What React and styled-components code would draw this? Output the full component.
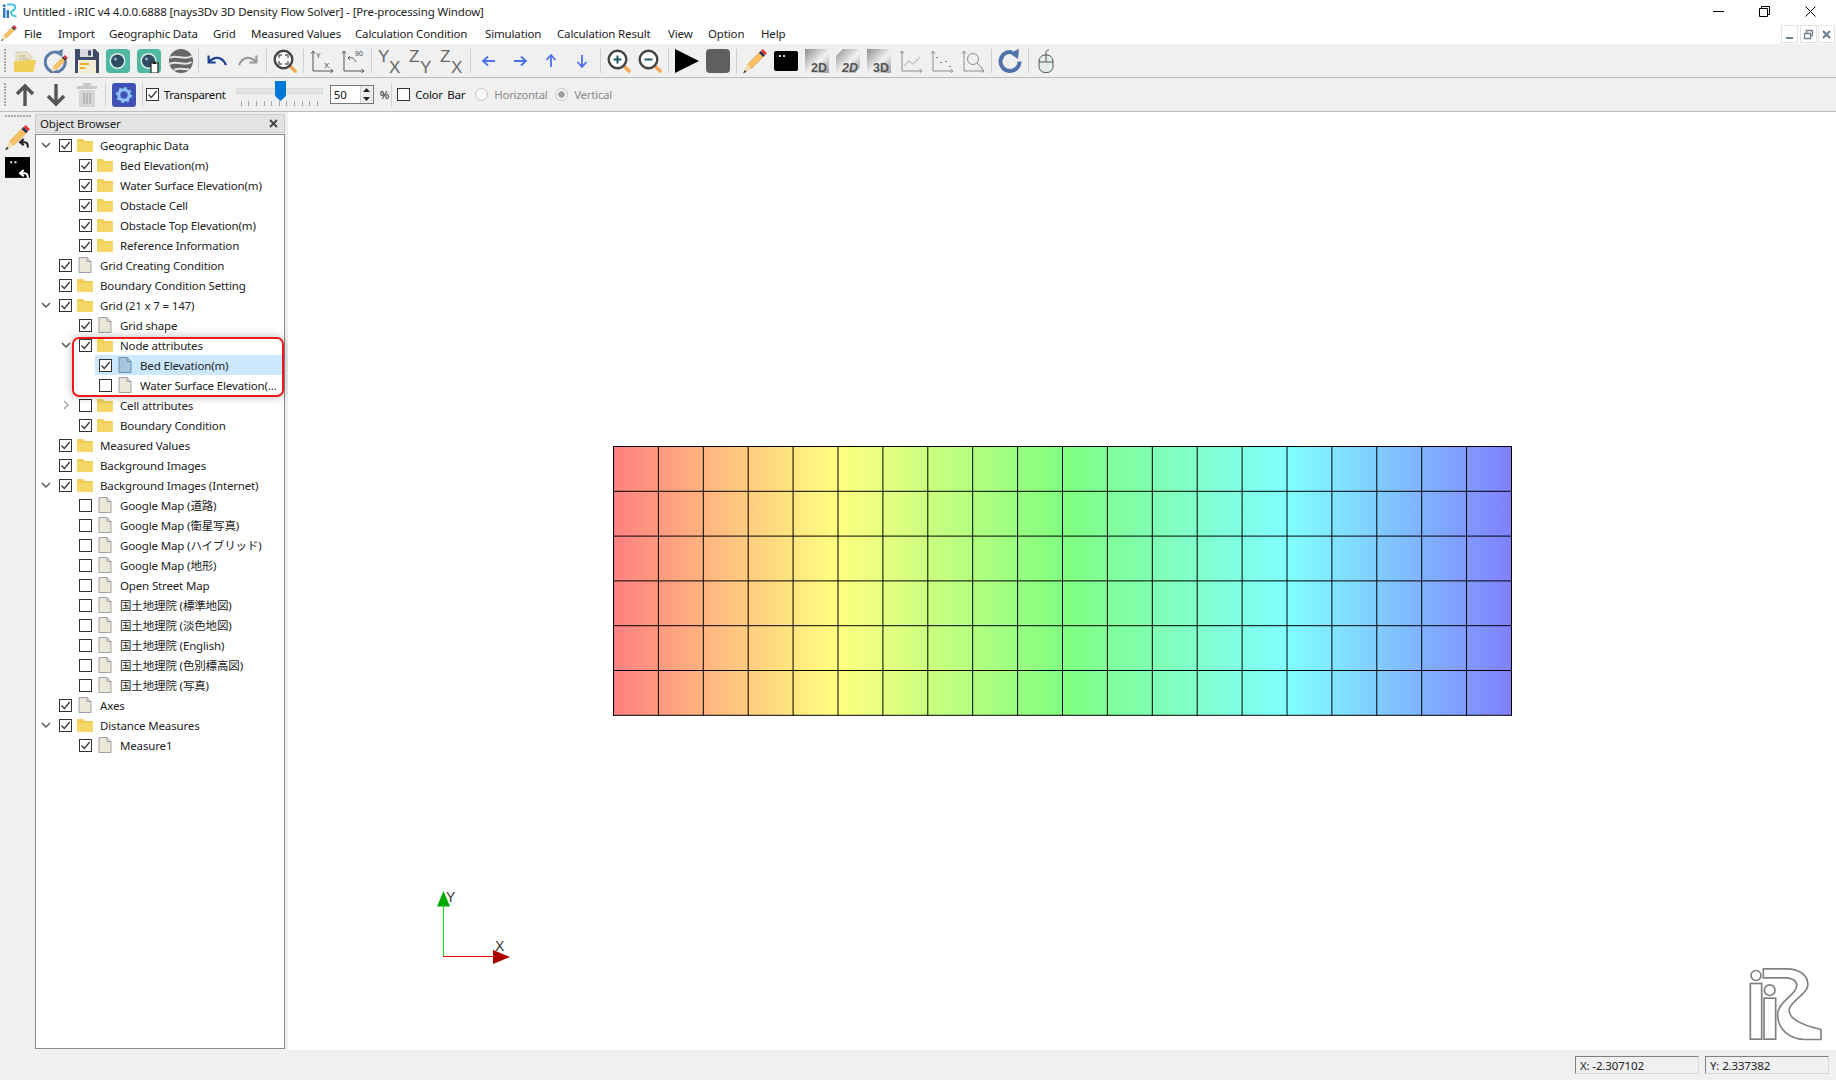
import React from 'react'
import styled, { createGlobalStyle } from 'styled-components'

const GlobalStyle = createGlobalStyle`
  html, body { margin: 0; padding: 0; background: #fff; }
  body {
    font-family: "Noto Sans", "Noto Sans CJK JP", sans-serif;
    font-size: 11.5px;
    letter-spacing: -0.15px;
    color: #111;
    overflow: hidden;
  }
`

const MENUS = [
  ['File', 17], ['Import', 34], ['Geographic Data', 87], ['Grid', 21], ['Measured Values', 87],
  ['Calculation Condition', 113], ['Simulation', 55], ['Calculation Result', 94], ['View', 23], ['Option', 36], ['Help', 26],
]

// level, arrow, checked, icon, label
const TREE = [
  [0, 'open', 1, 'folder', 'Geographic Data'],
  [1, '', 1, 'folder', 'Bed Elevation(m)'],
  [1, '', 1, 'folder', 'Water Surface Elevation(m)'],
  [1, '', 1, 'folder', 'Obstacle Cell'],
  [1, '', 1, 'folder', 'Obstacle Top Elevation(m)'],
  [1, '', 1, 'folder', 'Reference Information'],
  [0, '', 1, 'file', 'Grid Creating Condition'],
  [0, '', 1, 'folder', 'Boundary Condition Setting'],
  [0, 'open', 1, 'folder', 'Grid (21 x 7 = 147)'],
  [1, '', 1, 'file', 'Grid shape'],
  [1, 'open', 1, 'folder', 'Node attributes'],
  [2, '', 1, 'selected', 'Bed Elevation(m)'],
  [2, '', 0, 'file', 'Water Surface Elevation(...'],
  [1, 'closed', 0, 'folder', 'Cell attributes'],
  [1, '', 1, 'folder', 'Boundary Condition'],
  [0, '', 1, 'folder', 'Measured Values'],
  [0, '', 1, 'folder', 'Background Images'],
  [0, 'open', 1, 'folder', 'Background Images (Internet)'],
  [1, '', 0, 'file', 'Google Map (道路)'],
  [1, '', 0, 'file', 'Google Map (衛星写真)'],
  [1, '', 0, 'file', 'Google Map (ハイブリッド)'],
  [1, '', 0, 'file', 'Google Map (地形)'],
  [1, '', 0, 'file', 'Open Street Map'],
  [1, '', 0, 'file', '国土地理院 (標準地図)'],
  [1, '', 0, 'file', '国土地理院 (淡色地図)'],
  [1, '', 0, 'file', '国土地理院 (English)'],
  [1, '', 0, 'file', '国土地理院 (色別標高図)'],
  [1, '', 0, 'file', '国土地理院 (写真)'],
  [0, '', 1, 'file', 'Axes'],
  [0, 'open', 1, 'folder', 'Distance Measures'],
  [1, '', 1, 'file', 'Measure1'],
]

const Svg = ({ size = 24, children }) => (
  <svg width={size} height={size} viewBox="0 0 24 24">{children}</svg>
)

const PencilShape = () => (
  <g transform="translate(-2.9 -2.7) scale(1.18)">
    <polygon points="6,15.5 17,4.5 20.5,8 9.5,19" fill="#f7c063" stroke="#e09a3c" strokeWidth="0.5" />
    <polygon points="6,15.5 9.5,19 2.5,23" fill="#f4dcae" />
    <polygon points="4,20 5.5,21.5 2.5,23" fill="#333" />
    <polygon points="16,5.5 17.6,3.9 21.1,7.4 19.5,9" fill="#26365c" />
    <polygon points="17.6,3.9 19.2,2.3 22.7,5.8 21.1,7.4" fill="#e5303c" />
  </g>
)
const Pencil = ({ size }) => <Svg size={size}><PencilShape /></Svg>

const OpenFolder = () => (
  <Svg>
    <path d="M3 3h11l5 5v6H3z" fill="#e9e2c8" stroke="#c9c2a6" strokeWidth="0.6" />
    <path d="M6 7h7M6 10h10" stroke="#b9b39a" strokeWidth="1" />
    <path d="M1 12h8l2-1h12l-2.5 12H1z" fill="#f1cf58" />
  </Svg>
)
const RefreshEdit = () => (
  <Svg>
    <path d="M14 3.5A10 10 0 1 0 21 11" fill="none" stroke="#5b7cab" strokeWidth="3" />
    <polygon points="11,3.5 19,0 18,8" fill="#5b7cab" />
    <g transform="translate(6 6) scale(0.75)"><PencilShape /></g>
  </Svg>
)
const Floppy = () => (
  <Svg>
    <path d="M0 0h20l4 4v20H0z" fill="#3f4b69" />
    <rect x="5" y="0" width="13" height="8" fill="#d8dade" />
    <rect x="13" y="1.5" width="3" height="5" fill="#3f4b69" />
    <rect x="3" y="11" width="18" height="13" fill="#f4ecd6" />
    <rect x="5" y="14" width="9" height="2" fill="#e8b32a" />
    <rect x="5" y="18" width="5" height="2" fill="#e8b32a" />
  </Svg>
)
const Lens = ({ paper }) => (
  <Svg>
    <rect width="24" height="24" rx="4" fill="#4fb8a3" />
    <circle cx="11.5" cy="12" r="8" fill="#dcefea" />
    <circle cx="11.5" cy="12" r="6.5" fill="#2f4d62" />
    <circle cx="9.5" cy="10" r="1.6" fill="#8fb0c4" />
    {paper && <path d="M14 14h7v10H14z" fill="#fff" stroke="#222" strokeWidth="1.2" />}
    {paper && <rect x="16" y="12.5" width="3" height="2.5" fill="#222" />}
  </Svg>
)
const Globe = () => (
  <Svg>
    <circle cx="12" cy="12" r="12" fill="#666" />
    <path d="M1 9c6-4 14 3 22-2M0.5 15c8-4 15 3 22-2M5 21c6-3 10 0 15-1" fill="none" stroke="#e4e4e4" strokeWidth="2" />
  </Svg>
)
const Undo = ({ color, flip }) => (
  <Svg>
    <g transform={flip ? 'translate(24 0) scale(-1 1)' : undefined} fill="none" stroke={color} strokeWidth="2.2">
      <path d="M4 13c5-6 13-6 17 3" />
      <path d="M3.6 6.5v7h7" />
    </g>
  </Svg>
)
const Magnifier = ({ children, size = 24 }) => (
  <Svg size={size}>
    <line x1="15.5" y1="15.5" x2="22" y2="22" stroke="#f2a956" strokeWidth="3.6" strokeLinecap="round" />
    <circle cx="10.5" cy="10.5" r="8.8" fill="#fff" stroke="#444" strokeWidth="2.4" />
    {children}
  </Svg>
)
const AxisLines = () => (
  <g fill="none" stroke="#555" strokeWidth="1">
    <path d="M3 22V2M1 4.5 3 2l2 2.5M3 22h20M20.5 20l2.5 2-2.5 2" />
  </g>
)
const AxisText = styled.text`
  font-family: "Liberation Sans", sans-serif;
  letter-spacing: 0;
  fill: ${p => p.$fill || '#444'};
  font-weight: ${p => p.$bold ? 700 : 400};
  font-style: ${p => p.$italic ? 'italic' : 'normal'};
`
const AxisXY = () => (
  <Svg><AxisLines /><AxisText x="6" y="9" fontSize="7">Y</AxisText><AxisText x="14" y="19" fontSize="8">X</AxisText></Svg>
)
const AxisRot = () => (
  <Svg>
    <AxisLines />
    <path d="M15 13C13 9 11 8 7 9M7 9l2-2M7 9l2 2" fill="none" stroke="#555" />
    <AxisText x="14" y="7" fontSize="7">90</AxisText>
  </Svg>
)
const Letters = ({ a, b }) => (
  <svg width="30" height="30" viewBox="-3 -3 30 30">
    <AxisText x="0" y="13" fontSize="17" $fill="#666">{a}</AxisText>
    <AxisText x="11" y="24" fontSize="17" $fill="#666">{b}</AxisText>
  </svg>
)
const Arrow = ({ dir, color = '#4c6ff0', stroke = 1.8 }) => {
  const rot = { left: 180, right: 0, up: -90, down: 90 }[dir]
  return (
    <Svg>
      <g transform={`rotate(${rot} 12 12)`} fill="none" stroke={color} strokeWidth={stroke}>
        <path d="M6 12h12M13 7.5l5 4.5-5 4.5" />
      </g>
    </Svg>
  )
}
const Play = () => <Svg><polygon points="0,0 24,12 0,24" fill="#000" /></Svg>
const Stop = () => <Svg><rect width="24" height="24" rx="4" fill="#5f5f5f" /></Svg>
const Terminal = ({ size }) => (
  <Svg size={size}>
    <rect x="0" y="2" width="24" height="20" rx="2" fill="#000" />
    <rect x="5" y="6" width="2" height="2" fill="#ddd" />
    <rect x="9" y="6" width="2" height="2" fill="#ddd" />
  </Svg>
)
const View2D = ({ id, label, fold, italic }) => (
  <svg width="28" height="28" viewBox="-2 -2 28 28">
    <defs>
      <linearGradient id={id} x1="0" y1="0" x2="1" y2="1">
        <stop offset="0" stopColor="#8d8d8d" />
        <stop offset="0.55" stopColor="#f2f2f2" />
        <stop offset="1" stopColor="#9a9a9a" />
      </linearGradient>
    </defs>
    {fold
      ? <path d="M7 0H24V18L19 24H0V7z" fill={`url(#${id})`} />
      : <rect width="24" height="24" fill={`url(#${id})`} />}
    <AxisText x="6" y="23" fontSize="12.5" $bold $italic={italic} $fill="#555">{label}</AxisText>
  </svg>
)
const ChartAxes = ({ children }) => (
  <Svg>
    <g fill="none" stroke="#8f8f8f" strokeWidth="1">
      <path d="M3 22V2M1 4.5 3 2l2 2.5M3 22h20M20.5 20l2.5 2-2.5 2" />
      {children}
    </g>
  </Svg>
)
const Reload = () => (
  <Svg>
    <path d="M14 3.2A9.5 9.5 0 1 0 21.5 12.5" fill="none" stroke="#4f73a8" strokeWidth="4" />
    <polygon points="11,4 21,0 20,10" fill="#4f73a8" />
  </Svg>
)
const Mouse = () => (
  <Svg>
    <rect x="5" y="6" width="14" height="17.5" rx="6" fill="#e5ecec" stroke="#555" />
    <path d="M5 13h14M12 6v7" stroke="#555" fill="none" />
    <path d="M12 6V3c0-1.5 2-2 3-2" stroke="#555" fill="none" />
  </Svg>
)
const Trash = () => (
  <Svg>
    <rect x="8" y="0" width="8" height="3" fill="#c9c9c9" />
    <rect x="2" y="3" width="20" height="3" fill="#c9c9c9" />
    <path d="M4 7h16v17H4z" fill="#d6d6d6" />
    <path d="M9 10v11M12 10v11M15 10v11" stroke="#b0b0b0" strokeWidth="1.6" />
  </Svg>
)
const Gear = () => (
  <Svg>
    <rect width="24" height="24" rx="3" fill="#4052b5" />
    <circle cx="12" cy="12" r="5.2" fill="none" stroke="#8ec4f8" strokeWidth="3" />
    <circle cx="12" cy="12" r="7" fill="none" stroke="#8ec4f8" strokeWidth="2" strokeDasharray="2.5 3" />
  </Svg>
)
const BigArrow = ({ up }) => (
  <Svg>
    <g transform={up ? undefined : 'rotate(180 12 12)'} fill="none" stroke="#555" strokeWidth="3.4">
      <path d="M12 23V3M4 11l8-8 8 8" />
    </g>
  </Svg>
)
const BackArrow = ({ color }) => (
  <g fill="none" stroke={color} strokeWidth="2">
    <path d="M15 16.5h4c2 0 3 2 3 5M18 13.5l-3.5 3 3.5 3" />
  </g>
)

const Window = styled.div`
  position: relative;
  width: 100vw;
  height: 100vh;
  display: flex;
  flex-direction: column;
  overflow: hidden;
`
const TitleBar = styled.div`
  height: 22px;
  display: flex;
  align-items: center;
  padding-left: 2px;
  background: #fff;
  color: #222;
`
const TitleText = styled.span`
  margin-left: 6px;
  white-space: nowrap;
`
const WinButtons = styled.div`
  margin-left: auto;
  display: flex;
  align-items: center;
  gap: 35px;
  padding-right: 20px;
`
const MenuBar = styled.div`
  height: 22px;
  display: flex;
  align-items: center;
  background: #fff;
  padding-left: 1px;
  border-bottom: 1px solid #f0f0f0;
`
const MenuItem = styled.span`
  width: ${p => p.$w}px;
  margin-right: 17px;
  white-space: nowrap;
  color: #222;
`
const MenuSlot = styled.span`
  width: 23px;
  display: flex;
`
const MdiButtons = styled.div`
  margin-left: auto;
  margin-top: 2px;
  display: flex;
  gap: 1.5px;
  padding-right: 1px;
`
const MdiButton = styled.span`
  width: 17px;
  height: 18px;
  box-sizing: border-box;
  border: 1px solid #e2e2e2;
  display: flex;
  align-items: center;
  justify-content: center;
`
const Toolbar = styled.div`
  height: ${p => p.$h}px;
  flex: none;
  box-sizing: border-box;
  display: flex;
  align-items: center;
  background: #f0f0f0;
  border-bottom: 1px solid #bdbdbd;
`
const Handle = styled.span`
  width: 9px;
  height: 24px;
  flex: none;
  background: radial-gradient(circle at 5px 1px, #aaa 1px, transparent 1.2px) 0 0 / 9px 3px repeat-y;
`
const ToolButton = styled.span`
  width: 31.2px;
  flex: none;
  display: flex;
  justify-content: center;
`
const Separator = styled.span`
  width: 5.5px;
  height: 24px;
  flex: none;
  display: flex;
  justify-content: center;
  &::before { content: ''; width: 1px; background: #cfcfcf; }
`
const Label = styled.span`
  flex: none;
  width: ${p => p.$w}px;
  margin-left: ${p => p.$ml || 0}px;
  white-space: nowrap;
  letter-spacing: -0.3px;
  word-spacing: ${p => p.$wide ? 2 : 0}px;
  color: ${p => p.$off ? '#8a8a8a' : '#111'};
`
const CheckBox = styled.span`
  width: 13px;
  height: 13px;
  flex: none;
  box-sizing: border-box;
  border: 1px solid #333;
  background: #fff;
  display: flex;
  align-items: center;
  justify-content: center;
  margin-left: ${p => p.$ml || 0}px;
`
const Check = ({ on, ml }) => (
  <CheckBox $ml={ml}>
    {on ? (
      <svg width="11" height="11" viewBox="0 0 11 11">
        <path d="M1.5 5.5 4.3 8.5 9.7 2" fill="none" stroke="#333" strokeWidth="1.2" />
      </svg>
    ) : null}
  </CheckBox>
)
const Slider = styled.div`
  position: relative;
  width: 87px;
  height: 26px;
  flex: none;
  margin-left: 11px;
`
const Groove = styled.div`
  position: absolute;
  left: 0;
  right: 0;
  top: 6px;
  height: 4px;
  background: #e4e4e4;
  border: 1px solid #dcdcdc;
`
const Thumb = styled.svg`
  position: absolute;
  left: 39px;
  top: -1px;
`
const Ticks = styled.div`
  position: absolute;
  left: 5px;
  right: 5px;
  top: 19px;
  display: flex;
  justify-content: space-between;
`
const Tick = styled.span`
  width: 1px;
  height: 5px;
  background: #a8a8a8;
`
const SpinBox = styled.div`
  width: 44px;
  height: 19px;
  flex: none;
  box-sizing: border-box;
  margin-left: 7px;
  border: 1px solid #7a7a7a;
  background: #fff;
  display: flex;
  align-items: center;
  padding-left: 3px;
`
const SpinValue = styled.span`
  flex: 1;
`
const SpinArrows = styled.span`
  width: 12px;
  height: 100%;
  background: #ececec;
  border-left: 1px solid #d0d0d0;
  display: flex;
  flex-direction: column;
  align-items: center;
  justify-content: space-around;
`
const Radio = styled.span`
  width: 13px;
  height: 13px;
  flex: none;
  box-sizing: border-box;
  border-radius: 50%;
  border: 1px solid #c4c4c4;
  background: ${p => p.$on ? 'radial-gradient(circle, #a0a0a0 3px, #f4f4f4 3.5px)' : '#f7f7f7'};
  margin-left: ${p => p.$ml}px;
`
const Main = styled.div`
  flex: 1;
  min-height: 0;
  display: flex;
`
const Rail = styled.div`
  width: 35px;
  flex: none;
  background: #f0f0f0;
  display: flex;
  flex-direction: column;
  align-items: center;
  padding-top: 3px;
  box-sizing: border-box;
`
const RailHandle = styled.span`
  width: 26px;
  height: 3px;
  flex: none;
  background: radial-gradient(circle at 1px 1px, #aaa 1px, transparent 1.2px) 0 0 / 3px 3px repeat-x;
  margin-bottom: 3.5px;
`
const RailIcon = styled.span`
  height: 31px;
  display: flex;
  align-items: center;
`
const Dock = styled.div`
  width: 253px;
  flex: none;
  background: #f0f0f0;
  padding: 2px 3px 1px 0;
  box-sizing: border-box;
  display: flex;
  flex-direction: column;
  position: relative;
`
const DockTitle = styled.div`
  height: 19px;
  flex: none;
  box-sizing: border-box;
  background: #e3e3e3;
  border: 1px solid #cdcdcd;
  display: flex;
  align-items: center;
  justify-content: space-between;
  padding: 0 6px 0 4px;
  margin-bottom: 1px;
  color: #222;
`
const Tree = styled.div`
  flex: 1;
  background: #fff;
  border: 1px solid #8a8a8a;
  border-width: 1px 1.5px 1px 1.5px;
`
const Row = styled.div`
  height: 20px;
  display: flex;
  align-items: center;
  padding-left: ${p => 3 + p.$level * 20}px;
`
const ArrowSlot = styled.span`
  width: 14px;
  flex: none;
  display: flex;
  justify-content: center;
`
const RowBody = styled.div`
  flex: 1;
  height: 20px;
  margin-left: 2px;
  padding-left: 3.5px;
  display: flex;
  align-items: center;
  background: ${p => p.$selected ? '#cce8ff' : 'transparent'};
`
const RowIcon = styled.span`
  width: 16px;
  height: 16px;
  margin: 0 7px 0 5.5px;
  flex: none;
  display: flex;
`
const RowLabel = styled.span`
  white-space: nowrap;
  color: #222;
`
const Highlight = styled.div`
  position: absolute;
  left: 37px;
  top: 225px;
  width: 212px;
  height: 60px;
  box-sizing: border-box;
  border: 2px solid #f01818;
  border-radius: 7px;
  box-shadow: 0 0 10px rgba(0, 0, 0, 0.28);
  pointer-events: none;
`
const Canvas = styled.div`
  position: relative;
  flex: 1;
  background: #fff;
  display: flex;
  align-items: center;
  justify-content: center;
  padding-left: 2px;
`
const AxesWidget = styled.svg`
  position: absolute;
  left: 140px;
  bottom: 84px;
`
const Logo = styled.svg`
  position: absolute;
  right: 10px;
  bottom: 7px;
`
const StatusBar = styled.div`
  height: 30px;
  flex: none;
  background: #f0f0f0;
  display: flex;
  justify-content: flex-end;
  align-items: center;
  gap: 6px;
  padding: 0 7px 0 0;
`
const StatusCell = styled.div`
  width: 124px;
  height: 17.5px;
  box-sizing: border-box;
  border: 1px solid #d8d8d8;
  border-top: 1.5px solid #808080;
  border-left: 1.5px solid #808080;
  padding-left: 4px;
  line-height: 17px;
  color: #222;
`

const TreeIcon = ({ kind }) => {
  if (kind === 'folder') {
    return (
      <svg width="16" height="16" viewBox="0 0 16 16">
        <path d="M0 2h6l2 2h8v11H0z" fill="#f2cf58" />
        <path d="M0 6h16v9H0z" fill="#f5d768" />
      </svg>
    )
  }
  const sel = kind === 'selected'
  return (
    <svg width="16" height="16" viewBox="0 0 16 16">
      <path d="M2 .5h8l4 4v11H2z" fill={sel ? '#a4c6de' : '#ece8d8'} stroke={sel ? '#6d8ea8' : '#a0a0a0'} />
      <path d="M10 .5v4h4" fill="none" stroke={sel ? '#6d8ea8' : '#a0a0a0'} />
    </svg>
  )
}

const Chevron = ({ open }) => (
  <svg width="12" height="12" viewBox="0 0 12 12">
    {open
      ? <path d="M2 4l4 4 4-4" fill="none" stroke="#555" strokeWidth="1.4" />
      : <path d="M4 2l4 4-4 4" fill="none" stroke="#a6a6a6" strokeWidth="1.4" />}
  </svg>
)

const Mesh = () => {
  const cols = Array.from({ length: 21 }, (_, i) => 0.5 + i * 44.9)
  const rows = Array.from({ length: 7 }, (_, i) => 0.5 + i * 44.8)
  return (
    <svg width="901" height="270" viewBox="0 0 901 270">
      <defs>
        <linearGradient id="contour" x1="0" y1="0" x2="1" y2="0">
          <stop offset="0" stopColor="#ff8080" />
          <stop offset="0.25" stopColor="#ffff80" />
          <stop offset="0.5" stopColor="#80ff80" />
          <stop offset="0.75" stopColor="#80ffff" />
          <stop offset="1" stopColor="#8080ff" />
        </linearGradient>
      </defs>
      <rect x="0.5" y="0.5" width="898" height="268.8" fill="url(#contour)" />
      {cols.map(x => <line key={x} x1={x} x2={x} y1="0" y2="269.5" stroke="#000" />)}
      {rows.map(y => <line key={y} y1={y} y2={y} x1="0" x2="899" stroke="#000" />)}
    </svg>
  )
}

const Custom = () => {
  const tools = [
    <OpenFolder />, <RefreshEdit />, <Floppy />, <Lens />, <Lens paper />, <Globe />, null,
    <Undo color="#1c3f8f" />, <Undo color="#9a9a9a" flip />, null,
    <Magnifier><path d="M6 9V6h3M12 6h3v3M15 12v3h-3M9 15H6v-3" fill="none" stroke="#666" strokeWidth="1.4" /></Magnifier>, null,
    <AxisXY />, <AxisRot />, null,
    <Letters a="Y" b="X" />, <Letters a="Z" b="Y" />, <Letters a="Z" b="X" />, null,
    <Arrow dir="left" />, <Arrow dir="right" />, <Arrow dir="up" />, <Arrow dir="down" />, null,
    <Magnifier><path d="M6.5 10.5h8M10.5 6.5v8" stroke="#1e5560" strokeWidth="2" /></Magnifier>,
    <Magnifier><path d="M6.5 10.5h8" stroke="#1e5560" strokeWidth="2" /></Magnifier>, null,
    <Play />, <Stop />, null,
    <Pencil />, <Terminal />,
    <View2D id="g2a" label="2D" />, <View2D id="g2b" label="2D" fold italic />, <View2D id="g3" label="3D" />,
    <ChartAxes><path d="M5 17l5-5 4 3 7-7" stroke="#c4c4c4" strokeWidth="1.4" /></ChartAxes>,
    <ChartAxes><path d="M7 8v1M11 13v1M16 12v1M20 17v1" stroke="#666" strokeWidth="1.6" /></ChartAxes>,
    <ChartAxes><circle cx="12" cy="10" r="5.5" /><path d="M16 14l6 6" /></ChartAxes>, null,
    <Reload />, null,
    <Mouse />,
  ]
  return (
    <Window>
      <GlobalStyle />
      <TitleBar>
        <svg width="15" height="16" viewBox="0 0 15 16">
          <rect x="1" y="5" width="2.4" height="10" fill="#2f78c4" />
          <rect x="4.6" y="7" width="2.4" height="8" fill="#2f78c4" />
          <circle cx="2.2" cy="2.8" r="1.5" fill="#2f78c4" />
          <path d="M5 1.5h5c4 0 4 4.5 1 6-3 1.5-3 5 3.5 6" fill="none" stroke="#4dc3dd" strokeWidth="2" />
        </svg>
        <TitleText>Untitled - iRIC v4 4.0.0.6888 [nays3Dv 3D Density Flow Solver] - [Pre-processing Window]</TitleText>
        <WinButtons>
          <svg width="11" height="11" viewBox="0 0 11 11"><path d="M0 5.5h11" stroke="#000" /></svg>
          <svg width="11" height="11" viewBox="0 0 11 11"><path d="M.5 2.5h8v8h-8zM2.5 2.5v-2h8v8h-2" fill="none" stroke="#000" /></svg>
          <svg width="11" height="11" viewBox="0 0 11 11"><path d="M.5.5l10 10M10.5.5l-10 10" stroke="#000" /></svg>
        </WinButtons>
      </TitleBar>
      <MenuBar>
        <MenuSlot><Pencil size={16} /></MenuSlot>
        {MENUS.map(([name, w]) => <MenuItem key={name} $w={w}>{name}</MenuItem>)}
        <MdiButtons>
          <MdiButton>
            <svg width="11" height="11" viewBox="0 0 11 11"><path d="M2 9h7" stroke="#6f7f90" strokeWidth="2" /></svg>
          </MdiButton>
          <MdiButton>
            <svg width="11" height="11" viewBox="0 0 11 11"><path d="M1.5 4.5h6v5h-6zM3.5 4V1.5h6v5H8" fill="none" stroke="#6f7f90" strokeWidth="1.3" /></svg>
          </MdiButton>
          <MdiButton>
            <svg width="11" height="11" viewBox="0 0 11 11"><path d="M2 2l7 7M9 2l-7 7" stroke="#6f7f90" strokeWidth="2.2" /></svg>
          </MdiButton>
        </MdiButtons>
      </MenuBar>
      <Toolbar $h={33}>
        <Handle />
        {tools.map((t, i) => t ? <ToolButton key={i}>{t}</ToolButton> : <Separator key={i} />)}
      </Toolbar>
      <Toolbar $h={34}>
        <Handle />
        <ToolButton><BigArrow up /></ToolButton>
        <ToolButton><BigArrow /></ToolButton>
        <ToolButton><Trash /></ToolButton>
        <Separator />
        <ToolButton><Gear /></ToolButton>
        <Separator />
        <Check on ml={1} />
        <Label $w={61} $ml={5}>Transparent</Label>
        <Slider>
          <Groove />
          <Thumb width="11" height="20" viewBox="0 0 11 20"><path d="M0 0h11v15l-5.5 5L0 15z" fill="#0078d7" /></Thumb>
          <Ticks>{Array.from({ length: 11 }, (_, i) => <Tick key={i} />)}</Ticks>
        </Slider>
        <SpinBox>
          <SpinValue>50</SpinValue>
          <SpinArrows>
            <svg width="7" height="4" viewBox="0 0 7 4"><path d="M3.5 0 7 4H0z" fill="#222" /></svg>
            <svg width="7" height="4" viewBox="0 0 7 4"><path d="M0 0h7L3.5 4z" fill="#222" /></svg>
          </SpinArrows>
        </SpinBox>
        <Label $w={9} $ml={6}>%</Label>
        <Separator />
        <Check ml={3} />
        <Label $w={50} $ml={5} $wide>Color Bar</Label>
        <Radio $ml={10} />
        <Label $w={52} $ml={6} $off>Horizontal</Label>
        <Radio $on $ml={9} />
        <Label $w={40} $ml={6} $off>Vertical</Label>
      </Toolbar>
      <Main>
        <Rail>
          <RailHandle />
          <RailIcon>
            <Svg size={25}><PencilShape /><BackArrow color="#222" /></Svg>
          </RailIcon>
          <RailIcon>
            <Svg size={25}><rect x="0" y="1" width="24" height="20" fill="#000" /><rect x="5" y="5" width="2" height="2" fill="#ddd" /><rect x="9" y="5" width="2" height="2" fill="#ddd" /><BackArrow color="#fff" /></Svg>
          </RailIcon>
        </Rail>
        <Dock>
          <DockTitle>
            Object Browser
            <svg width="9" height="9" viewBox="0 0 9 9"><path d="M1 1l7 7M8 1L1 8" stroke="#444" strokeWidth="1.8" /></svg>
          </DockTitle>
          <Tree>
            {TREE.map(([level, arrow, on, icon, label], i) => (
              <Row key={i} $level={level}>
                <ArrowSlot>{arrow && <Chevron open={arrow === 'open'} />}</ArrowSlot>
                <RowBody $selected={icon === 'selected'}>
                  <Check on={!!on} />
                  <RowIcon><TreeIcon kind={icon} /></RowIcon>
                  <RowLabel>{label}</RowLabel>
                </RowBody>
              </Row>
            ))}
          </Tree>
          <Highlight />
        </Dock>
        <Canvas>
          <Mesh />
          <AxesWidget width="90" height="80" viewBox="0 0 90 80">
            <line x1="15.5" y1="20" x2="15.5" y2="71" stroke="#10e010" />
            <line x1="15" y1="70.5" x2="65" y2="70.5" stroke="#f00000" />
            <polygon points="15.5,5 9,20.5 22,20.5" fill="#00aa00" />
            <polygon points="65,64 65,78 82,71" fill="#aa0000" />
            <AxisText x="18" y="16" fontSize="14" $fill="#333">Y</AxisText>
            <AxisText x="67" y="65" fontSize="14" $fill="#333">X</AxisText>
          </AxesWidget>
          <Logo width="80" height="77" viewBox="560 50 240 230">
            <g fill="#fff" stroke="#808080" strokeWidth="5">
              <circle cx="590" cy="78" r="15" />
              <rect x="573" y="102" width="34" height="167" />
              <circle cx="631" cy="122" r="16" />
              <rect x="614" y="146" width="35" height="123" />
              <path d="M612 58H680C730 58 748 85 745 110C742 135 698 150 690 178C685 205 720 225 785 240V270H735C690 268 655 240 655 195C655 155 715 135 712 105C710 92 695 85 680 85H612Z" />
            </g>
          </Logo>
        </Canvas>
      </Main>
      <StatusBar>
        <StatusCell>X: -2.307102</StatusCell>
        <StatusCell>Y: 2.337382</StatusCell>
      </StatusBar>
    </Window>
  )
}

export default Custom
